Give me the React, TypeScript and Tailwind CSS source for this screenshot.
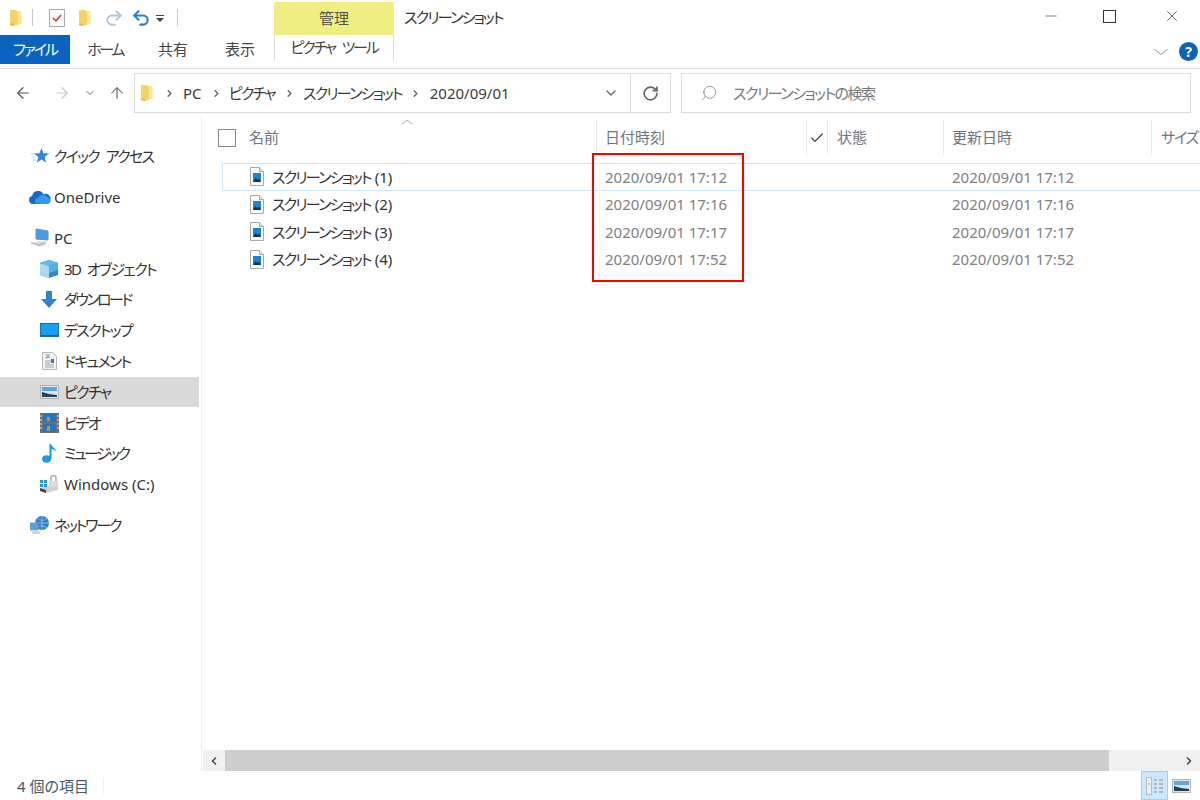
// Explorer window: スクリーンショット folder, details view
import { ArrowLeft, ArrowRight, ArrowUp, ChevronDown, ChevronLeft, ChevronRight, ChevronUp, RotateCw, Search, Check, Minus, Undo2, Redo2, X } from "lucide-react";

function Folder({ className = "" }: { className?: string }) {
  return (
    <svg viewBox="0 0 14 18" className={className}>
      <path d="M1 1h6l1 1h3v13l-6 2-4-1z" fill="#f6d365" />
      <path d="M9 2h3.500v13H9z" fill="#fbe69a" />
      <path d="M1 14l4 1v2l-4-1z" fill="#e8b93f" />
    </svg>
  );
}

function FileIcon() {
  return (
    <svg viewBox="0 0 16 19" className="w-4 h-[19px] shrink-0">
      <path d="M1.500.5h9l4 4v14h-13z" fill="#fbfbfb" stroke="#a9a9a9" />
      <path d="M10.500.5v4h4" fill="#e6e6e6" stroke="#a9a9a9" />
      <rect x="4" y="6" width="8" height="9" fill="#1b85d8" />
      <path d="M4 15l2.500-4 2 2 1.500-1.500 2 3.500z" fill="#12355f" />
    </svg>
  );
}

function PicturesIcon({ className = "" }: { className?: string }) {
  return (
    <svg viewBox="0 0 19 14" className={className}>
      <rect x=".5" y=".5" width="18" height="13" fill="#e4e4e4" stroke="#b5b5b5" />
      <rect x="2" y="2" width="15" height="4" fill="#5aa8e6" />
      <rect x="2" y="6" width="15" height="6" fill="#dfe8f0" />
      <path d="M2 7l7 2 8 1v2H2z" fill="#263f5c" />
    </svg>
  );
}

const navIcons: Record<string, React.ReactNode> = {
  star: (
    <svg viewBox="0 0 18 16" className="w-[18px] h-4">
      <path d="M10.500 0l2 5.200 5.500.3-4.300 3.400 1.500 5.600-4.700-3.100-4.700 3.100 1.500-5.600L3 5.500l5.500-.3z" fill="#2b8ad8" />
      <path d="M0 6h4M1 9h3M2 12h3" stroke="#a5d2f2" />
    </svg>
  ),
  cloud: (
    <svg viewBox="0 0 22 14" className="w-[22px] h-[14px]">
      <path d="M4 14a4 4 0 0 1-.8-7.900A6 6 0 0 1 14.500 4.300 5 5 0 0 1 21.500 9.500 4 4 0 0 1 18 14z" fill="#0f6cc0" />
      <path d="M9 14a3 3 0 0 1 0-6 5 5 0 0 1 9-1 4 4 0 0 1 3.500 3A4 4 0 0 1 18 14z" fill="#2f9be6" />
    </svg>
  ),
  pc: (
    <svg viewBox="0 0 20 19" className="w-5 h-[19px]">
      <path d="M6 1l12 2v9L6 11z" fill="#3ea1e6" stroke="#7d8c99" />
      <path d="M1 15l9-2 6 1v3l-7 2z" fill="#dcdcdc" />
      <path d="M1 15l8 2 7-3" stroke="#a8a8a8" fill="none" />
    </svg>
  ),
  cube: (
    <svg viewBox="0 0 18 18" className="w-[18px] h-[18px]">
      <path d="M9 0l9 3v12l-9 3-9-3V3z" fill="#2f87cf" />
      <path d="M0 3l9 3v12l-9-3z" fill="#a8dcf5" />
      <path d="M9 0l9 3-9 3-9-3z" fill="#5db9ee" />
      <path d="M9 6l9-3v7l-9 3z" fill="#56aee8" />
    </svg>
  ),
  down: (
    <svg viewBox="0 0 16 17" className="w-4 h-[17px]">
      <path d="M5 0h6v8h5l-8 9-8-9h5z" fill="#2b84d6" />
    </svg>
  ),
  desktop: (
    <svg viewBox="0 0 19 14" className="w-[19px] h-[14px]">
      <rect width="19" height="14" fill="#16a0f5" />
      <rect x="0" y="12" width="19" height="2" fill="#0b5fa8" />
      <rect x=".5" y=".5" width="18" height="13" fill="none" stroke="#1b6fb8" />
    </svg>
  ),
  doc: (
    <svg viewBox="0 0 15 18" className="w-[15px] h-[18px]">
      <path d="M.5.5h10l4 4v13H.5z" fill="#f3f3f3" stroke="#b5b5b5" />
      <path d="M3 3h5M3 6h2M3 9h9M3 11h5M3 13h9M3 15h9" stroke="#9aa7b3" />
      <rect x="9" y="7" width="3" height="4" fill="#3a78b5" />
      <path d="M6 3l2 3H4z" fill="#5aa8e6" />
    </svg>
  ),
  pics: <PicturesIcon className="w-[19px] h-[14px]" />,
  video: (
    <svg viewBox="0 0 19 20" className="w-[19px] h-5">
      <rect width="19" height="20" fill="#6f6f6f" />
      <rect x="3" y="1" width="13" height="8" fill="#1f77c8" />
      <rect x="3" y="11" width="13" height="8" fill="#1f77c8" />
      <path d="M7 4h3v4H7zM7 13h3v5H7z" fill="#c9913f" />
      <path d="M1 2v16M18 2v16" stroke="#e6e6e6" strokeDasharray="2 2" />
    </svg>
  ),
  music: (
    <svg viewBox="0 0 15 19" className="w-[15px] h-[19px]">
      <ellipse cx="4.500" cy="15" rx="4.500" ry="3.800" fill="#1e96ec" />
      <path d="M7.500 15V0h1.500c.5 3 5 4 5 8-1-2-3-3-4.500-3v10z" fill="#1e96ec" />
    </svg>
  ),
  drive: (
    <svg viewBox="0 0 20 18" className="w-5 h-[18px]">
      <path d="M1 13l12-3 6 1v4l-12 3-6-2z" fill="#cfcfcf" />
      <path d="M1 13l6 2v3l-6-2z" fill="#3d4a57" />
      <rect x="1" y="5" width="3" height="3" fill="#1e96ec" />
      <rect x="5" y="5" width="3" height="3" fill="#1e96ec" />
      <rect x="1" y="9" width="3" height="3" fill="#1e96ec" />
      <rect x="5" y="9" width="3" height="3" fill="#1e96ec" />
      <path d="M12 9V3a2.500 2.500 0 0 1 5 0v7" fill="none" stroke="#a8a8a8" strokeWidth="1.500" />
      <rect x="10" y="6" width="9" height="6" fill="#dcdcdc" />
    </svg>
  ),
  net: (
    <svg viewBox="0 0 20 19" className="w-5 h-[19px]">
      <circle cx="12" cy="7" r="7" fill="#2f7fc4" />
      <path d="M5 7h14M12 0v14M7 2c3 3 7 3 10 0M7 12c3-3 7-3 10 0" stroke="#a5d2f2" fill="none" strokeWidth=".7" />
      <rect x="0" y="7" width="8" height="7" fill="#4aa5e8" stroke="#7d8c99" strokeWidth=".7" />
      <path d="M1 15h8l2 3H3z" fill="#d2d2d2" />
    </svg>
  ),
};

// track: katakana in the reference runs tighter than Noto's proportional kana
const NAV = [
  { label: "クイック アクセス", icon: "star", top: true, track: "tracking-[-1.8px] [word-spacing:5px]" },
  { label: "OneDrive", icon: "cloud", top: true, track: "" },
  { label: "PC", icon: "pc", top: true, track: "" },
  { label: "3D オブジェクト", icon: "cube", track: "tracking-[-1.6px] [word-spacing:4px]" },
  { label: "ダウンロード", icon: "down", track: "tracking-[-2.5px]" },
  { label: "デスクトップ", icon: "desktop", track: "tracking-[-1.7px]" },
  { label: "ドキュメント", icon: "doc", track: "tracking-[-1.7px]" },
  { label: "ピクチャ", icon: "pics", active: true, track: "tracking-[-1.7px]" },
  { label: "ビデオ", icon: "video", track: "tracking-[-2px]" },
  { label: "ミュージック", icon: "music", track: "tracking-[-2.5px]" },
  { label: "Windows (C:)", icon: "drive", track: "" },
  { label: "ネットワーク", icon: "net", top: true, track: "tracking-[-2.2px]" },
];

const FILES = [
  { num: "(1)", date: "2020/09/01 17:12", selected: true },
  { num: "(2)", date: "2020/09/01 17:16" },
  { num: "(3)", date: "2020/09/01 17:17" },
  { num: "(4)", date: "2020/09/01 17:52" },
];

function QuickAccess() {
  return (
    <div className="h-[35px] flex items-center">
      <Folder className="w-[14px] h-[18px] ml-[9px]" />
      <div className="w-px h-[17px] bg-[#c8c8c8] ml-[9px]" />
      <svg viewBox="0 0 16 18" className="w-4 h-[18px] ml-[16px]">
        <path d="M.5.5h15v17H.5z" fill="#fbfbfb" stroke="#a8a8a8" />
        <path d="M4 9l3 3 5-6" fill="none" stroke="#e0282e" strokeWidth="1.500" />
      </svg>
      <Folder className="w-[14px] h-[18px] ml-[13px]" />
      <Redo2 size={20} strokeWidth={2.4} className="ml-[12px] text-[#b4c4d2]" />
      <Undo2 size={20} strokeWidth={2.6} className="ml-[7px] text-[#2580cf]" />
      <svg viewBox="0 0 8 8" className="w-2 h-2 ml-[5px] mt-[3px]">
        <path d="M0 0h8v1H0zM0 3h8L4 7z" fill="#444" />
      </svg>
      <div className="w-px h-[17px] bg-[#c8c8c8] ml-[13px]" />
      <div className="ml-[96px] w-[120px] h-[33px] mt-[2px] bg-[#f0ee82] flex items-center justify-center text-[#55554a]">
        管理
      </div>
      <span className="ml-[10px] text-[#333] tracking-[-1.8px]">スクリーンショット</span>
      <div className="flex-1" />
      <Minus size={14} strokeWidth={1} className="text-[#333] mr-[45px] mb-[3px] scale-x-125" />
      <span className="w-[13px] h-[13px] border border-[#333] mr-[47px] mb-[3px]" />
      <X size={18} strokeWidth={1} className="text-[#333] mr-[19px] mb-[3px]" />
    </div>
  );
}

function RibbonTabs() {
  return (
    <div className="h-[34px] flex items-start border-b border-[#dadada] text-[#444]">
      <div className="w-[70px] h-[29px] bg-[#0a63bf] text-white flex items-center justify-center tracking-[-2px]">ファイル</div>
      <span className="w-[70px] h-[29px] flex items-center justify-center tracking-[-2.5px]">ホーム</span>
      <span className="w-[66px] h-[29px] flex items-center justify-center">共有</span>
      <span className="w-[68px] h-[29px] flex items-center justify-center">表示</span>
      <div className="w-[120px] h-[25px] border-x border-[#dcdcdc] flex items-center justify-center tracking-[-2.2px] [word-spacing:5px]">ピクチャ ツール</div>
      <div className="flex-1" />
      <ChevronDown size={20} strokeWidth={1} className="text-[#999] mr-[8px] mt-[7px] scale-x-125" />
      <div className="w-[19px] h-[19px] rounded-full bg-[#0a63bf] text-white text-[14px] font-bold flex items-center justify-center mt-[7px] mr-[2px]">?</div>
    </div>
  );
}

function AddressBar() {
  return (
    <div className="h-[46px] flex items-start pt-[4px]">
      <ArrowLeft size={18} strokeWidth={1.6} className="ml-[14px] mt-[11px] text-[#555]" />
      <ArrowRight size={18} strokeWidth={1.6} className="ml-[21px] mt-[11px] text-[#c8c8c8]" />
      <ChevronDown size={12} strokeWidth={2} className="ml-[13px] mt-[14px] text-[#666]" />
      <ArrowUp size={18} strokeWidth={1.4} className="ml-[12px] mt-[11px] text-[#555]" />
      <div className="ml-[8px] w-[537px] h-[40px] border border-[#dcdcdc] flex items-center text-[#3a3a3a]">
        <div className="flex-1 flex items-center">
          <Folder className="w-[14px] h-[18px] ml-[5px]" />
          <ChevronRight size={11} strokeWidth={3} className="ml-[10px] text-[#666]" />
          <span className="ml-[8px]">PC</span>
          <ChevronRight size={11} strokeWidth={3} className="ml-[9px] text-[#666]" />
          <span className="ml-[7px] tracking-[-1.7px]">ピクチャ</span>
          <ChevronRight size={11} strokeWidth={3} className="ml-[9px] text-[#666]" />
          <span className="ml-[8px] tracking-[-1.8px]">スクリーンショット</span>
          <ChevronRight size={11} strokeWidth={3} className="ml-[8px] text-[#666]" />
          <span className="ml-[9px]">2020/09/01</span>
        </div>
        <ChevronDown size={16} strokeWidth={2} className="mr-[11px] text-[#666]" />
        <div className="w-[40px] h-full border-l border-[#dcdcdc] flex items-center justify-center">
          <RotateCw size={17} strokeWidth={2.4} className="text-[#666]" />
        </div>
      </div>
      <div className="ml-[10px] flex-1 mr-[9px] h-[40px] border border-[#dcdcdc] flex items-center text-[#777]">
        <Search size={18} strokeWidth={1} className="ml-[18px] text-[#777] -scale-x-100" />
        <span className="ml-[15px] tracking-[-1.5px]">スクリーンショットの検索</span>
      </div>
    </div>
  );
}

function Sidebar() {
  return (
    <nav className="w-[202px] shrink-0 border-r border-[#f0f0f0] pt-[26px] text-[#333]">
      {NAV.map((item, i) => (
        <div
          key={item.label}
          className={`h-[30.8px] w-[199px] flex items-center ${
            item.top ? "pl-[29px] gap-[3px]" : "pl-[39px] gap-[5px]"
          } ${item.top && i > 0 ? "mt-[10px]" : ""} ${item.active ? "bg-[#d9d9d9]" : ""}`}
        >
          <span className={`flex items-center justify-center shrink-0 ${item.top ? "w-[22px]" : "w-5"}`}>
            {navIcons[item.icon]}
          </span>
          <span className={`whitespace-nowrap ${item.track}`}>{item.label}</span>
        </div>
      ))}
    </nav>
  );
}

function ColumnHeader() {
  return (
    <div className="relative h-[35px] mt-[5px] flex text-[#6d7680]">
      <div className="w-[395px] flex items-center shrink-0 border-r border-[#e8e8e8]">
        <span className="w-[18px] h-[18px] border border-[#8a8a8a] ml-[16px]" />
        <span className="ml-[13px]">名前</span>
      </div>
      <div className="w-[210px] flex items-center pl-[8px] shrink-0 border-r border-[#e8e8e8]">日付時刻</div>
      <div className="w-[21px] flex items-center justify-center shrink-0 border-r border-[#e8e8e8]">
        <Check size={16} strokeWidth={1.6} className="text-[#333]" />
      </div>
      <div className="w-[116px] flex items-center pl-[9px] shrink-0 border-r border-[#e8e8e8]">状態</div>
      <div className="w-[208px] flex items-center pl-[8px] shrink-0 border-r border-[#e8e8e8]">更新日時</div>
      <div className="flex items-center pl-[9px] whitespace-nowrap tracking-[-1.2px]">サイズ</div>
      <ChevronUp size={16} strokeWidth={1} className="absolute left-[197px] -top-[6px] text-[#888] scale-x-125" />
    </div>
  );
}

function FileRow({ num, date, selected }: { num: string; date: string; selected?: boolean }) {
  return (
    <div
      className={`h-[27.5px] flex items-center ml-[20px] -mr-[4px] ${
        selected ? "outline outline-[#cce8ff] -outline-offset-1" : ""
      }`}
    >
      <div className="w-[375px] shrink-0 flex items-center text-[#333] pl-[27px]">
        <FileIcon />
        <span className="ml-[7px] whitespace-nowrap">
          <span className="tracking-[-1.8px]">スクリーンショット</span> {num}
        </span>
      </div>
      <span className="w-[355px] shrink-0 pl-[8px] text-[#808080] whitespace-nowrap">{date}</span>
      <span className="text-[#808080] whitespace-nowrap">{date}</span>
    </div>
  );
}

function Scrollbar() {
  return (
    <div className="h-[21px] ml-[1px] bg-[#f0f0f0] flex items-center">
      <div className="w-[22px] flex items-center justify-center">
        <ChevronLeft size={12} strokeWidth={3} className="text-[#444]" />
      </div>
      <div className="w-[884px] h-full bg-[#cdcdcd]" />
      <div className="flex-1" />
      <div className="w-[22px] flex items-center justify-center">
        <ChevronRight size={12} strokeWidth={3} className="text-[#444]" />
      </div>
    </div>
  );
}

function StatusBar() {
  return (
    <div className="h-[29px] flex items-center text-[#46586b]">
      <span className="ml-[17px] mt-[1px]">4 個の項目</span>
      <div className="w-px h-[16px] bg-[#f0f0f0] ml-[14px]" />
      <div className="flex-1" />
      <div className="w-[27px] h-full bg-[#cce8ff] border border-[#99d1ff] flex items-center justify-center">
        <svg viewBox="0 0 18 18" className="w-[18px] h-[18px]">
          <rect x=".5" y=".5" width="5" height="17" fill="#eee" stroke="#bbb" />
          <path d="M8 3h3M13 3h4M8 7h3M13 7h4M8 11h3M13 11h4M8 15h3M13 15h4" stroke="#8a8a8a" />
          <path d="M2 7h2" stroke="#d9763a" />
        </svg>
      </div>
      <PicturesIcon className="w-[19px] h-[14px] ml-[4px] mr-[9px]" />
    </div>
  );
}

export default function App() {
  return (
    <div className="relative w-[1200px] h-[800px] overflow-hidden bg-white flex flex-col text-[15px] [font-family:'Noto_Sans','Noto_Sans_CJK_JP',sans-serif] [font-feature-settings:'palt']">
      <QuickAccess />
      <RibbonTabs />
      <AddressBar />
      <div className="flex-1 flex min-h-0">
        <Sidebar />
        <div className="flex-1 min-w-0 flex flex-col">
          <ColumnHeader />
          <div className="flex-1 pt-[8px]">
            {FILES.map((f) => (
              <FileRow key={f.num} {...f} />
            ))}
          </div>
          <Scrollbar />
        </div>
      </div>
      <StatusBar />
      {/* red highlight around the date column */}
      <div className="absolute left-[592px] top-[153px] w-[152px] h-[129px] border-2 border-[#ff0000]" />
    </div>
  );
}
